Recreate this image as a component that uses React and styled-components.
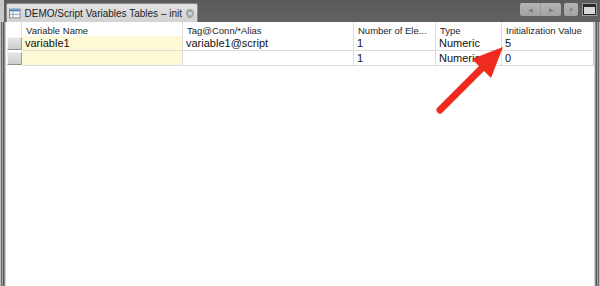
import React from "react";
import styled, { createGlobalStyle } from "styled-components";

const Global = createGlobalStyle`
  html, body { margin: 0; padding: 0; background: #fff; }
  body { font-family: "Liberation Sans", Arial, sans-serif; }
`;

const Frame = styled.div`
  position: relative;
  width: 600px;
  height: 286px;
  display: flex;
  flex-direction: column;
  overflow: hidden;
  background: #fff;
`;

const TitleBar = styled.div`
  height: 22px;
  flex: none;
  display: flex;
  align-items: flex-end;
  background: linear-gradient(#5a5a5a, #626262);
  box-sizing: border-box;
  border-left: 4px solid #c8c8c8;
  padding-left: 2px;
  padding-right: 4px;
`;

const Tab = styled.div`
  width: 192px;
  height: 19px;
  box-sizing: border-box;
  display: flex;
  align-items: center;
  gap: 4px;
  padding: 0 3px 0 2px;
  background: linear-gradient(#e2e2e2, #d2d2d2);
  border: 1px solid #8a8a8a;
  border-bottom: none;
  border-radius: 2px 2px 0 0;
  font-size: 10px;
  color: #1c1c1c;
  white-space: nowrap;
`;

const TabTitle = styled.span`
  flex: 1;
`;

const Close = styled.span`
  width: 9px;
  height: 9px;
  border-radius: 50%;
  background: #a4a4a4;
  color: #eee;
  font-size: 8px;
  line-height: 9px;
  text-align: center;
  font-weight: bold;
`;

const Spacer = styled.div`
  flex: 1;
`;

const Controls = styled.div`
  display: flex;
  align-items: center;
  gap: 3px;
  align-self: center;
  margin-top: -3px;
`;

const Seg = styled.div`
  display: flex;
  height: 13px;
  background: linear-gradient(#b5b5b5, #a2a2a2);
  border-radius: 2px;
`;

const SegBtn = styled.div`
  width: ${p => p.$w || 20}px;
  height: 13px;
  display: flex;
  align-items: center;
  justify-content: center;
  color: #7c7c7c;
  font-size: 6px;
  & + & { border-left: 1px solid #999; }
`;

const MaxIcon = styled.div`
  width: 13px;
  height: 11px;
  box-sizing: border-box;
  border: 1px solid #222;
  border-top: 3px solid #2a2a2a;
  background: #d8d8d8;
  margin-left: 2px;
  box-shadow: 0 0 0 1px #9a9a9a;
`;

const Body = styled.div`
  flex: 1;
  display: flex;
`;

const SideBorder = styled.div`
  width: 6px;
  flex: none;
  background: ${p => p.$right
    ? "linear-gradient(90deg, #cfcfcf 0 1px, #8a8a8a 1px 2px, #5c5c5c 2px 3px, #a0a0a0 3px 4px, #6a6a6a 4px 5px, #bdbdbd 5px 6px)"
    : "linear-gradient(90deg, #bdbdbd 0 1px, #6a6a6a 1px 2px, #a0a0a0 2px 3px, #5c5c5c 3px 4px, #8a8a8a 4px 5px, #cfcfcf 5px 6px)"};
`;

const Table = styled.div`
  flex: 1;
  display: flex;
  flex-direction: column;
`;

const cols = "16px 161px 171px 82px 66px 1fr";

const HeaderRow = styled.div`
  display: grid;
  grid-template-columns: ${cols};
  height: 14px;
`;

const Row = styled.div`
  display: grid;
  grid-template-columns: ${cols};
  height: 15px;
`;

const HeadCell = styled.div`
  box-sizing: border-box;
  border-right: 1px solid #e0e0e0;
  font-size: 9.5px;
  color: #262626;
  padding: 3px 0 0 4px;
  white-space: nowrap;
  overflow: hidden;
  &:last-child { border-right: 1px solid #c8c8c8; }
`;

const Cell = styled.div`
  box-sizing: border-box;
  border-right: 1px solid #dcdcdc;
  border-bottom: 1px solid #dcdcdc;
  background: ${p => (p.$yellow ? "#fdfad5" : "#fff")};
  font-size: 11px;
  line-height: 14px;
  color: #111;
  padding-left: 3px;
  white-space: nowrap;
  overflow: hidden;
  &:last-child { border-right: 1px solid #c8c8c8; }
`;

const RowHead = styled.div`
  box-sizing: border-box;
  margin: 1px 0 0 1px;
  height: 13px;
  background: linear-gradient(#e6e6e6, #cdcdcd);
  border-right: 1px solid #9a9a9a;
  border-bottom: 1px solid #8c8c8c;
  border-left: 1px solid #f2f2f2;
  border-top: 1px solid #f2f2f2;
`;

const Arrow = styled.svg`
  position: absolute;
  left: 0;
  top: 0;
  pointer-events: none;
`;

const TableIcon = () => (
  <svg width="13" height="13" viewBox="0 0 13 13">
    <rect x="0.5" y="1.5" width="12" height="10" fill="#f4f4f4" stroke="#6c86a8" />
    <rect x="1" y="2" width="11" height="2" fill="#4f7fc2" />
    <line x1="4.5" y1="4" x2="4.5" y2="11" stroke="#8aa0bd" />
    <line x1="1" y1="7.5" x2="12" y2="7.5" stroke="#8aa0bd" />
  </svg>
);

const rows = [
  ["variable1", "variable1@script", "1", "Numeric", "5"],
  ["", "", "1", "Numeric", "0"],
];

export default function App() {
  return (
    <>
      <Global />
      <Frame>
        <TitleBar>
          <Tab>
            <TableIcon />
            <TabTitle>DEMO/Script Variables Tables – init</TabTitle>
            <Close>×</Close>
          </Tab>
          <Spacer />
          <Controls>
            <Seg>
              <SegBtn>◀</SegBtn>
              <SegBtn>▶</SegBtn>
            </Seg>
            <Seg>
              <SegBtn $w={14}>▼</SegBtn>
            </Seg>
            <MaxIcon />
          </Controls>
        </TitleBar>
        <Body>
          <SideBorder />
          <Table>
            <HeaderRow>
              <HeadCell />
              <HeadCell>Variable Name</HeadCell>
              <HeadCell>Tag@Conn/*Alias</HeadCell>
              <HeadCell>Number of Ele...</HeadCell>
              <HeadCell>Type</HeadCell>
              <HeadCell>Initialization Value</HeadCell>
            </HeaderRow>
            {rows.map((r, i) => (
              <Row key={i}>
                <RowHead />
                {r.map((v, j) => (
                  <Cell key={j} $yellow={j === 0}>{v}</Cell>
                ))}
              </Row>
            ))}
          </Table>
          <SideBorder $right />
        </Body>
        <Arrow width="600" height="286" viewBox="0 0 600 286">
          <line x1="440" y1="110" x2="485" y2="65" stroke="#ef2a1f" strokeWidth="7" strokeLinecap="round" />
          <polygon points="503,47 472,59 491,78" fill="#ef2a1f" />
        </Arrow>
      </Frame>
    </>
  );
}
